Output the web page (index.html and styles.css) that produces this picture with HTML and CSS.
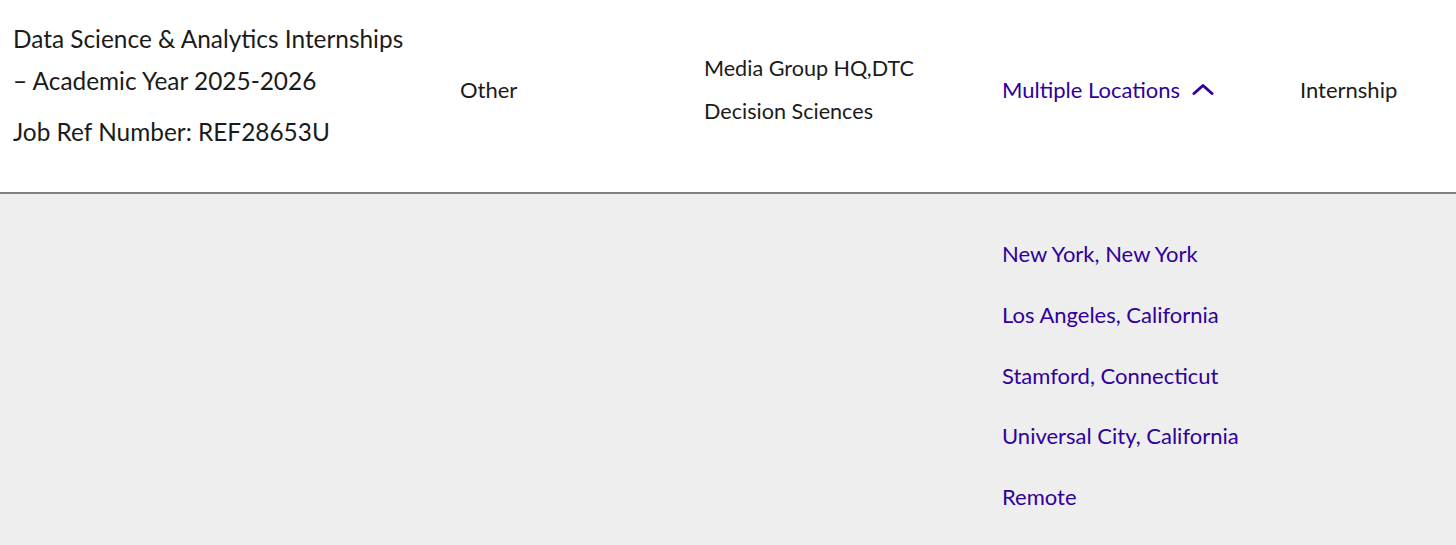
FILE: index.html
```html
<!DOCTYPE html>
<html lang="en">
<head>
<meta charset="utf-8">
<title>Jobs</title>
<link rel="stylesheet" href="styles.css">
</head>
<body>
<div class="job">
  <div class="job-row">
    <div class="cell cell-title">
      <div class="title">Data Science &amp; Analytics Internships<br>– Academic Year 2025-2026</div>
      <div class="ref">Job Ref Number: REF28653U</div>
    </div>
    <div class="cell cell-cat">Other</div>
    <div class="cell cell-dept">
      <div class="line">Media Group HQ,DTC</div>
      <div class="line">Decision Sciences</div>
    </div>
    <div class="cell cell-loc">
      <button class="loc-toggle" type="button">Multiple Locations
        <svg class="chev" width="22" height="13" viewBox="0 0 22 13"><path d="M2 10.5 L11 2.5 L20 10.5" fill="none" stroke="currentColor" stroke-width="3" stroke-linecap="round" stroke-linejoin="round"/></svg>
      </button>
    </div>
    <div class="cell cell-type">Internship</div>
  </div>
  <div class="job-detail">
    <ul class="loc-list">
      <li><a href="#">New York, New York</a></li>
      <li><a href="#">Los Angeles, California</a></li>
      <li><a href="#">Stamford, Connecticut</a></li>
      <li><a href="#">Universal City, California</a></li>
      <li><a href="#">Remote</a></li>
    </ul>
  </div>
</div>
</body>
</html>
```

FILE: styles.css
```css
html, body {
  margin: 0;
  padding: 0;
  background: #eeeeee;
}
body {
  font-family: "Lato", "Liberation Sans", sans-serif;
  color: #1b1b1b;
}
.job-row {
  display: grid;
  grid-template-columns: 447px 244px 298px 298px 1fr;
  padding: 18px 0 39px 13px;
  background: #ffffff;
  border-bottom: 2px solid #808080;
  align-items: center;
  height: 135px;
}
.cell {
  font-size: 22px;
}
.cell-title {
  align-self: start;
}
.title {
  font-size: 24.4px;
  line-height: 42px;
}
.ref {
  font-size: 24.4px;
  line-height: 42px;
  margin-top: 9px;
}
.cell-cat, .cell-loc, .cell-type {
  padding-top: 7px;
}
.cell-dept {
  padding-top: 9px;
}
.cell-dept .line {
  font-size: 21.6px;
  line-height: 43.5px;
}
.loc-toggle {
  display: flex;
  align-items: center;
  gap: 12px;
  padding: 0;
  border: 0;
  background: none;
  font: inherit;
  color: #30009c;
  cursor: pointer;
}
.chev {
  display: block;
}
.job-detail {
  display: grid;
  grid-template-columns: 989px 1fr;
  padding: 30px 0 0 13px;
}
.loc-list {
  grid-column: 2;
  list-style: none;
  margin: 0;
  padding: 0;
}
.loc-list li {
  font-size: 22px;
  line-height: 60.8px;
}
.loc-list a {
  color: #30009c;
  text-decoration: none;
}
```
